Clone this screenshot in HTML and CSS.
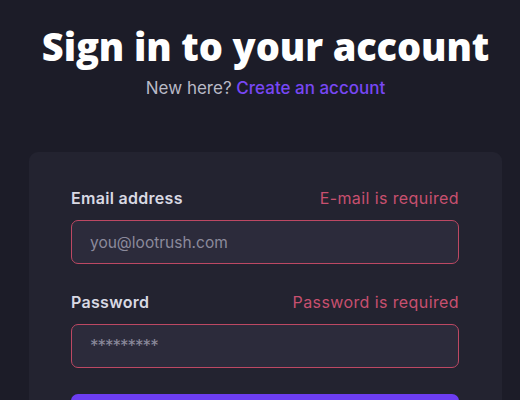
FILE: index.html
```html
<!DOCTYPE html>
<html lang="en">
<head>
<meta charset="utf-8">
<title>Sign in</title>
<link rel="stylesheet" href="styles.css">
</head>
<body>
<main class="page">
  <header class="intro">
    <h1 class="title">Sign in to your account</h1>
    <p class="subtitle">New here? <a class="link" href="#">Create an account</a></p>
  </header>
  <section class="card">
    <form class="form">
      <div class="field">
        <div class="field-head">
          <label class="label" for="email">Email address</label>
          <span class="error">E-mail is required</span>
        </div>
        <input class="input" id="email" type="email" placeholder="you@lootrush.com">
      </div>
      <div class="field field-last">
        <div class="field-head">
          <label class="label" for="password">Password</label>
          <span class="error">Password is required</span>
        </div>
        <input class="input input-password" id="password" type="password" placeholder="*********">
      </div>
      <button class="submit" type="button">Sign in</button>
    </form>
  </section>
</main>
</body>
</html>
```

FILE: styles.css
```css
html, body {
  margin: 0;
  padding: 0;
  background: #1c1c28;
  height: 100%;
  overflow: hidden;
}
body {
  font-family: Inter, "Liberation Sans", sans-serif;
  color: #e6e6ee;
}
.page {
  display: flex;
  flex-direction: column;
  align-items: center;
  padding-top: 22px;
  padding-left: 11px;
}
.intro {
  text-align: center;
}
.title {
  margin: 0;
  font-family: "Open Sans", Inter, sans-serif;
  font-weight: 800;
  font-size: 38px;
  line-height: 48px;
  letter-spacing: -0.1px;
  color: #ffffff;
}
.subtitle {
  margin: 8px 0 0;
  font-size: 17px;
  line-height: 20px;
  color: #b9b9c6;
}
.link {
  color: #7847f5;
  text-decoration: none;
  font-weight: 500;
}
.card {
  margin-top: 54px;
  width: 473px;
  box-sizing: border-box;
  padding: 35px 43px 40px 42px;
  background: #232330;
  border-radius: 9px;
}
.form {
  display: flex;
  flex-direction: column;
}
.field {
  display: flex;
  flex-direction: column;
  gap: 11px;
  margin-bottom: 27px;
}
.field-last {
  margin-bottom: 26px;
}
.field-head {
  display: flex;
  justify-content: space-between;
  align-items: baseline;
  line-height: 22px;
}
.label {
  font-size: 16px;
  font-weight: 600;
  letter-spacing: 0.3px;
  color: #d9d9e3;
}
.error {
  font-size: 16px;
  letter-spacing: 0.4px;
  color: #c8506f;
}
.input {
  height: 44px;
  box-sizing: border-box;
  padding: 0 18px;
  border: 1px solid #bd4863;
  border-radius: 7px;
  background: #2c2b3b;
  font-family: inherit;
  font-size: 15.5px;
  color: #e6e6ee;
  outline: none;
}
.input::placeholder {
  color: #8b8a9b;
}
.input-password::placeholder {
  letter-spacing: -1px;
  font-size: 17px;
}
.submit {
  margin-top: 0;
  height: 44px;
  border: none;
  border-radius: 7px;
  background: #6c3df2;
  color: #fff;
  font-family: inherit;
  font-size: 16px;
  font-weight: 600;
}
```
